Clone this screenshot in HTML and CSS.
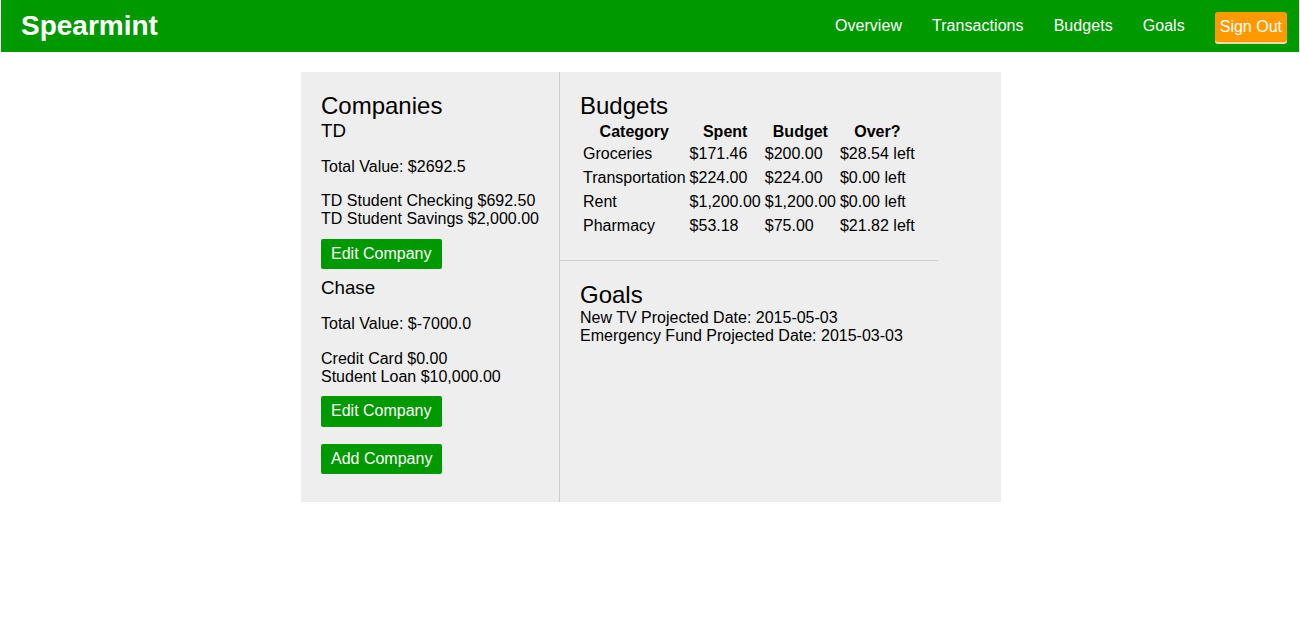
FILE: index.html
```html
<!DOCTYPE html>
<html>
<head>
<meta charset="utf-8">
<title>Spearmint</title>
<link rel="stylesheet" href="styles.css">
</head>
<body>
<header class="topbar">
  <div class="brand">Spearmint</div>
  <nav class="nav">
    <a class="nav-link" href="#">Overview</a>
    <a class="nav-link" href="#">Transactions</a>
    <a class="nav-link" href="#">Budgets</a>
    <a class="nav-link" href="#">Goals</a>
    <a class="nav-link signout" href="#">Sign Out</a>
  </nav>
</header>
<main class="panel">
  <section class="companies">
    <h2 class="title">Companies</h2>
    <div class="company">
      <h3 class="company-name">TD</h3>
      <p class="total">Total Value: $2692.5</p>
      <div class="accounts">
        <div>TD Student Checking $692.50</div>
        <div>TD Student Savings $2,000.00</div>
      </div>
      <button class="btn">Edit Company</button>
    </div>
    <div class="company">
      <h3 class="company-name">Chase</h3>
      <p class="total">Total Value: $-7000.0</p>
      <div class="accounts">
        <div>Credit Card $0.00</div>
        <div>Student Loan $10,000.00</div>
      </div>
      <button class="btn">Edit Company</button>
    </div>
    <button class="btn add">Add Company</button>
  </section>
  <section class="right">
    <div class="budgets">
      <h2 class="title">Budgets</h2>
      <table class="budget-table">
        <thead>
          <tr><th>Category</th><th>Spent</th><th>Budget</th><th>Over?</th></tr>
        </thead>
        <tbody>
          <tr><td>Groceries</td><td>$171.46</td><td>$200.00</td><td>$28.54 left</td></tr>
          <tr><td>Transportation</td><td>$224.00</td><td>$224.00</td><td>$0.00 left</td></tr>
          <tr><td>Rent</td><td>$1,200.00</td><td>$1,200.00</td><td>$0.00 left</td></tr>
          <tr><td>Pharmacy</td><td>$53.18</td><td>$75.00</td><td>$21.82 left</td></tr>
        </tbody>
      </table>
    </div>
    <div class="goals">
      <h2 class="title">Goals</h2>
      <div>New TV Projected Date: 2015-05-03</div>
      <div>Emergency Fund Projected Date: 2015-03-03</div>
    </div>
  </section>
</main>
</body>
</html>
```

FILE: styles.css
```css
html, body {
  margin: 0;
  padding: 0;
  background: #ffffff;
  font-family: "Liberation Sans", Arial, sans-serif;
  font-size: 16px;
  color: #000;
}

.topbar {
  margin: 0 1px;
  height: 52px;
  background: #009900;
  display: flex;
  align-items: center;
  justify-content: space-between;
  padding: 0 12px 0 20px;
}

.brand {
  color: #fff;
  font-weight: bold;
  font-size: 28px;
  line-height: 32px;
  margin-top: -1px;
}

.nav {
  display: flex;
  align-items: center;
  gap: 30px;
}

.nav-link {
  color: #fff;
  text-decoration: none;
  font-size: 16px;
  line-height: 18px;
  letter-spacing: 0.05px;
}

.signout {
  background: #ff9900;
  border-radius: 3px;
  padding: 6px 5px;
  box-shadow: 0 2px 0 #f2d9a6;
  margin-top: 1px;
  letter-spacing: 0;
}

.panel {
  width: 700px;
  margin: 20px 0 0 calc(50% - 349px);
  background: #eeeeee;
  display: flex;
}

.companies {
  width: 259px;
  border-right: 1px solid #cccccc;
  padding: 20px 0 28px 20px;
  box-sizing: border-box;
}

.title {
  font-size: 24px;
  font-weight: normal;
  margin: 0;
  line-height: 27.6px;
}

.company-name {
  font-size: 18.72px;
  font-weight: normal;
  margin: 0;
  line-height: 22px;
}

.total {
  margin: 16px 0;
  line-height: 18.4px;
}

.accounts {
  line-height: 18.4px;
  margin-bottom: 10px;
}

.btn {
  display: block;
  font-family: "Liberation Sans", Arial, sans-serif;
  font-size: 16px;
  line-height: 18.4px;
  color: #fff;
  background: #009900;
  border: none;
  border-radius: 2px;
  padding: 6px 10px;
  margin: 0 0 8px 0;
  cursor: pointer;
}

.btn.add {
  margin-top: 17px;
  margin-bottom: 0;
}

.right {
  flex: 1;
  display: flex;
  flex-direction: column;
  align-items: flex-start;
}

.budgets {
  padding: 20px 20px 20px;
  border-bottom: 1px solid #cccccc;
}

.budget-table {
  border-spacing: 2px;
}

.budget-table th {
  font-weight: bold;
  padding: 1px;
  line-height: 18.4px;
}

.budget-table td {
  padding: 1px 1px 3px;
  line-height: 18px;
  text-align: left;
}

.goals {
  padding: 20px;
  line-height: 18px;
}
```
